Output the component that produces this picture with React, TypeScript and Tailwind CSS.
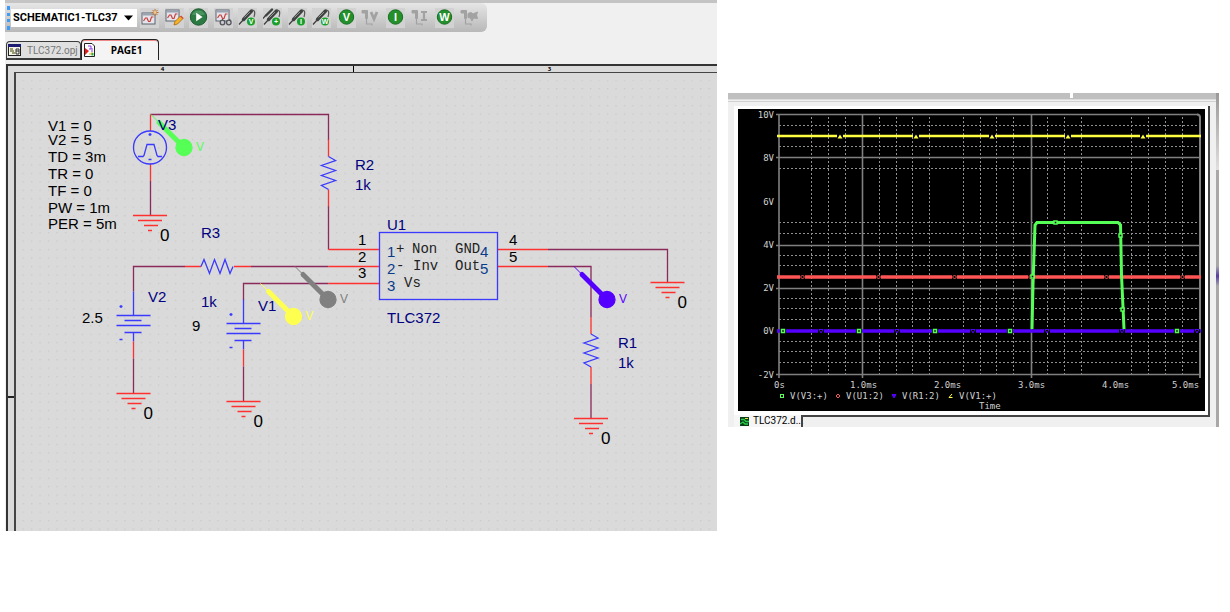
import React from "react";

const WIRE = "#8a2a5a";
const PIN = "#ff3030";
const PART = "#3a3aff";
const LABEL = "#000080";

/* ---------- Toolbar icons ---------- */

function GraphWindow() {
  return (
    <g>
      <rect x="2" y="5" width="13" height="11" fill="#e4e4ea" stroke="#5b6470" />
      <path d="M2 6.5h13" stroke="#9aa3b0" strokeWidth="2" />
      <path d="M3.5 13 5.5 10 7 10 8.5 13.5 10 13.5 11.5 9 13.5 9" fill="none" stroke="#c8403c" strokeWidth="1.2" />
    </g>
  );
}

function NewProfileIcon() {
  return (
    <g>
      <GraphWindow />
      <path d="M15 1v7M11.5 4.5h7M12.5 2l5 5M17.5 2l-5 5" stroke="#b87434" strokeWidth="1" />
      <circle cx="15" cy="4.5" r="1.4" fill="#f3c98d" />
    </g>
  );
}

function EditProfileIcon() {
  return (
    <g>
      <g transform="translate(-1 -3)">
        <GraphWindow />
      </g>
      <path d="M9 17 10 13.5 15.5 8 18 10.5 12.5 16Z" fill="#f5b32c" stroke="#a8660c" strokeWidth="0.8" />
      <path d="M15.5 8 18 10.5" stroke="#d84c3c" strokeWidth="1.6" />
    </g>
  );
}

function RunIcon() {
  return (
    <g>
      <circle cx="9.5" cy="9" r="8.2" fill="#2c7a43" stroke="#1d5a2f" />
      <path d="M3 7a7 7 0 0 1 13 0Z" fill="#5fa173" opacity="0.6" />
      <path d="M7.2 4.8v8.4L13.6 9Z" fill="#fff" />
    </g>
  );
}

function ViewResultsIcon() {
  return (
    <g>
      <g transform="translate(0 -3)">
        <GraphWindow />
      </g>
      <path d="M7 13 9 11M17 13l-1.5-2" stroke="#55565c" strokeWidth="1" />
      <circle cx="8.5" cy="14.5" r="2.3" fill="#c9c9cf" stroke="#55565c" strokeWidth="1.3" />
      <circle cx="14.8" cy="14.5" r="2.3" fill="#c9c9cf" stroke="#55565c" strokeWidth="1.3" />
    </g>
  );
}

function Needle() {
  return (
    <g>
      <path d="M1 16.5 6 11" stroke="#3c3c3c" strokeWidth="1.2" />
      <path d="M5.5 11.5 13.5 3" stroke="#3f4140" strokeWidth="3.4" strokeLinecap="round" />
      <path d="M6.5 9.5 12 4" stroke="#9a9c9b" strokeWidth="0.9" />
      <path d="M14 2c3.5 0 3 3.500 2 7" fill="none" stroke="#555" strokeWidth="1.200" />
    </g>
  );
}

function Badge({ letter }: { letter: string }) {
  return (
    <g>
      <circle cx="13" cy="13.5" r="4" fill="#18a02a" />
      <text x="13" y="16" textAnchor="middle" className="font-['Liberation_Sans'] text-[7px] font-bold" fill="#fff">
        {letter}
      </text>
    </g>
  );
}

function ProbeIcon({ letter, twin }: { letter: string; twin?: boolean }) {
  return (
    <g>
      {twin && (
        <g transform="translate(-1 -2)">
          <path d="M1 12.5 4 9" stroke="#3c3c3c" strokeWidth="1.2" />
          <path d="M4 9.5 10 3.5" stroke="#3f4140" strokeWidth="2.4" strokeLinecap="round" />
        </g>
      )}
      <Needle />
      <Badge letter={letter} />
    </g>
  );
}

function DiscIcon({ letter }: { letter: string }) {
  return (
    <g>
      <circle cx="9.5" cy="9" r="7.2" fill="#23902c" stroke="#157020" />
      <text x="9.5" y="12.8" textAnchor="middle" className="font-['Liberation_Sans'] text-[11px] font-bold" fill="#fff">
        {letter}
      </text>
    </g>
  );
}

function DisabledMarkerIcon({ kind }: { kind: "V" | "I" | "W" }) {
  return (
    <g fill="none" stroke="#a2a2a2">
      <path d="M1 2.5h5.5v8H4.500V5H1Z" fill="#a2a2a2" />
      <path d="M5.5 11v5H11v1.5" strokeWidth="1.2" />
      {kind === "V" && <path d="M10 4 13 11 16 4" strokeWidth="2.8" />}
      {kind === "I" && <path d="M10 4h6M13 4v8M10 12h6" strokeWidth="2.2" />}
      {kind === "W" && (
        <path d="M8 5.500 11 4.500 13 6 17.500 4 16.500 7 17.500 10.500 13.500 10 12 13 10.500 10 8 9.500Z" fill="#a2a2a2" strokeWidth="1" />
      )}
    </g>
  );
}

const tools: { name: string; icon: React.ReactNode; disabled?: boolean }[] = [
  { name: "New simulation profile", icon: <NewProfileIcon /> },
  { name: "Edit simulation profile", icon: <EditProfileIcon /> },
  { name: "Run", icon: <RunIcon /> },
  { name: "View simulation results", icon: <ViewResultsIcon /> },
  { name: "Voltage marker", icon: <ProbeIcon letter="V" /> },
  { name: "Differential voltage markers", icon: <ProbeIcon letter="+" twin /> },
  { name: "Current marker", icon: <ProbeIcon letter="I" /> },
  { name: "Power marker", icon: <ProbeIcon letter="W" /> },
  { name: "Enable bias voltage display", icon: <DiscIcon letter="V" /> },
  { name: "Toggle voltage on net", icon: <DisabledMarkerIcon kind="V" />, disabled: true },
  { name: "Enable bias current display", icon: <DiscIcon letter="I" /> },
  { name: "Toggle current on pin", icon: <DisabledMarkerIcon kind="I" />, disabled: true },
  { name: "Enable bias power display", icon: <DiscIcon letter="W" /> },
  { name: "Toggle power on part", icon: <DisabledMarkerIcon kind="W" />, disabled: true },
];

function Toolbar() {
  return (
    <div className="flex h-[29px] w-[482px] items-center rounded-r-md bg-gradient-to-b from-[#e6e6e6] to-[#b8b8b8] pl-[2px]">
      <span className="h-6 w-[3px] border-l-[3px] border-dotted border-[#3d9bf5]" />
      <div className="relative ml-px h-[18px] w-[126px] shrink-0 bg-white">
        <select
          aria-label="Active simulation profile"
          className="block h-[18px] w-[107px] appearance-none overflow-hidden bg-transparent pl-[2px] font-['Roboto',sans-serif] text-[11px] leading-[17px] font-bold text-black outline-none"
        >
          <option>SCHEMATIC1-TLC372</option>
        </select>
        <svg className="pointer-events-none absolute top-[6px] right-[4px] h-[6px] w-[9px]" viewBox="0 0 9 6">
          <path d="M0 0.5h9L4.500 5.500Z" fill="#000" />
        </svg>
      </div>
      <div className="flex flex-1 justify-between pr-2 pl-[3px]">
        {tools.map((t) => (
          <button
            key={t.name}
            type="button"
            aria-label={t.name}
            disabled={t.disabled}
            className="h-5 w-[19px] bg-[#d2d2d2] disabled:bg-transparent"
          >
            <svg className="h-[19px] w-[19px]" viewBox="0 0 19 19">
              {t.icon}
            </svg>
          </button>
        ))}
      </div>
    </div>
  );
}

function DocumentTabs() {
  return (
    <div className="flex h-[21px] items-end pl-px">
      <button
        type="button"
        className="flex h-[19px] w-[75px] items-center gap-[6px] rounded-t border border-b-2 border-[#3a3a3a] bg-[#e0e0e0] pl-px font-['Roboto',sans-serif] text-[10px] text-[#777]"
      >
        <svg className="h-3 w-[13px] shrink-0" viewBox="0 0 13 12">
          <rect x="0.5" y="0.5" width="12" height="11" fill="#f4f4e8" stroke="#222" />
          <path d="M0 1.5h13" stroke="#1c1c70" strokeWidth="3" />
          <path d="M2 5h3M2 7h4M4 9h3" stroke="#7d8048" strokeWidth="1.5" />
          <path d="M8 5h3v5H8ZM8 7h3" fill="none" stroke="#333" />
        </svg>
        TLC372.opj
      </button>
      <button
        type="button"
        className="flex h-[21px] w-[78px] items-center rounded-t border border-b-0 border-[#222] bg-[#f4f4f4] pl-[2px] font-['Open_Sans',sans-serif] text-[10px] font-bold text-black shadow-[inset_0_1px_0_#ee8888]"
      >
        <svg className="h-[14px] w-[11px] shrink-0" viewBox="0 0 11 14">
          <path d="M0.5 0.5H8L10.500 3v10.500H0.500Z" fill="#fff" stroke="#222" />
          <path d="M1 5l4 3-4 4Z" fill="#f01818" />
          <path d="M4 3h3v3H5M8 5v4" fill="none" stroke="#8a3ae0" />
          <path d="M5 11h3V9" fill="none" stroke="#e8b000" />
          <path d="M8.5 10v2.5" stroke="#20b040" strokeWidth="2" />
        </svg>
        <span className="flex-1 text-center">PAGE1</span>
      </button>
    </div>
  );
}

/* ---------- Schematic ---------- */

function Ground({ x, y }: { x: number; y: number }) {
  return (
    <g>
      <path d={`M${x - 17} ${y}h34M${x - 12} ${y + 5}h24M${x - 6} ${y + 10}h14M${x - 2} ${y + 15}h4`} stroke={PIN} />
      <text x={x + 10} y={y + 25} className="text-[17px]" fill="#000">
        0
      </text>
    </g>
  );
}

function Battery({ x, y }: { x: number; y: number }) {
  return (
    <g>
      <path d={`M${x} ${y - 24}v24M${x} ${y + 17}v9`} stroke={PART} />
      <path d={`M${x - 17} ${y}h34M${x - 9} ${y + 5}h17M${x - 17} ${y + 10}h34M${x - 9} ${y + 17}h17`} stroke={PART} />
      <path d={`M${x - 14} ${y - 9}h3M${x - 12.5} ${y - 10.5}v3M${x - 14} ${y + 24}h3`} stroke={PART} />
      <path d={`M${x} ${y + 26}v17`} stroke={PIN} />
      <path d={`M${x} ${y + 43}v35`} stroke={WIRE} />
      <Ground x={x} y={y + 78} />
    </g>
  );
}

function ResistorDown({ x, y }: { x: number; y: number }) {
  return (
    <g>
      <path d={`M${x} ${y - 17}v17M${x} ${y + 33}v17`} stroke={PIN} />
      <path d={`M${x} ${y}l7 4l-14 5l14 5l-14 5l14 5l-14 5l7 4`} stroke={PART} />
    </g>
  );
}

function Probe({ x, y, color }: { x: number; y: number; color: string }) {
  return (
    <g stroke={color}>
      <path d={`M${x} ${y}l8 8`} strokeWidth="1" />
      <path d={`M${x + 8} ${y + 8}l24 24`} strokeWidth="5" strokeLinecap="round" />
      <circle cx={x + 33} cy={y + 33} r="8" fill={color} />
      <text x={x + 45} y={y + 36} className="text-[12px]" fill={color} stroke="none">
        V
      </text>
    </g>
  );
}

const params: [string, number][] = [
  ["V1 = 0", 131],
  ["V2 = 5", 145],
  ["TD = 3m", 162],
  ["TR = 0", 179],
  ["TF = 0", 196],
  ["PW = 1m", 213],
  ["PER = 5m", 229],
];

const partLabels: [string, number, number][] = [
  ["V3", 158, 130],
  ["R2", 355, 170],
  ["1k", 355, 190],
  ["R3", 201, 238],
  ["1k", 201, 307],
  ["U1", 387, 230],
  ["TLC372", 387, 323],
  ["V2", 148, 302],
  ["V1", 258, 311],
  ["R1", 618, 348],
  ["1k", 618, 368],
];

const blackLabels: [string, number, number][] = [
  ["1", 358, 245],
  ["2", 358, 262],
  ["3", 358, 278],
  ["4", 509, 245],
  ["5", 509, 262],
  ["2.5", 82, 323],
  ["9", 192, 331],
];

const pinNumbers: [string, number, number][] = [
  ["1", 387, 257],
  ["2", 387, 274],
  ["3", 387, 291],
  ["4", 480, 257],
  ["5", 480, 274],
];

const pinNames: [string, number, number][] = [
  ["+", 396, 253],
  ["Non", 412, 253],
  ["-", 396, 270],
  ["Inv", 413, 270],
  ["Vs", 404, 287],
  ["GND", 455, 253],
  ["Out", 455, 270],
];

function Schematic() {
  return (
    <svg
      viewBox="16 73 701 458"
      className="block h-auto w-full bg-[#dadada] font-['Liberation_Sans',Arial,sans-serif]"
      role="img"
      aria-label="Schematic"
    >
      <defs>
        <pattern id="dots" x="22.5" y="88" width="8.47" height="8.47" patternUnits="userSpaceOnUse">
          <rect width="1.3" height="1.3" fill="#c9c9c9" />
        </pattern>
      </defs>
      <rect x="16" y="80" width="701" height="451" fill="url(#dots)" />

      <g fill="none" strokeWidth="1.3">
        <path d="M150.5 114.5H328.500V140M328.500 206V249.500M150.500 181V215.500" stroke={WIRE} />
        <path d="M150.5 114.5V131M150.500 163.500V181" stroke={PIN} />
        <circle cx="150" cy="147.5" r="16.5" stroke={PART} />
        <path d="M138 156.5h5l1-1 3-11h7l3 11 1 1h4M148.500 134.500h3M150 133v3M148.500 159.500h3" stroke={PART} />
        <Ground x={150} y={215.5} />

        <ResistorDown x={328.5} y={156.5} />

        <path d="M133.5 291.5V266.500H185M251 266.500H328.500M243.500 300V283.500H328.500" stroke={WIRE} />
        <path d="M185 266.5H201M234 266.500H251M328.500 249.500H379M328.500 266.500H379M328.500 283.500H379" stroke={PIN} />
        <path d="M201 266.5l3-7 5.500 14 5-14 5.500 14 5-14 5 14 3-7" stroke={PART} />
        <Battery x={133.5} y={315.5} />
        <Battery x={243.5} y={323.5} />

        <path d="M498 249.5H548M498 266.500H548" stroke={PIN} />
        <path d="M548 249.5H667.500V283M548 266.500H591V317M591 384V418" stroke={WIRE} />
        <Ground x={667.5} y={282.5} />
        <ResistorDown x={591} y={334} />
        <Ground x={591} y={418.5} />

        <rect x="379.5" y="232.5" width="118" height="67" stroke={PART} />

        <Probe x={151} y={114.5} color="#55ff55" />
        <Probe x={260.5} y={283.5} color="#ffff50" />
        <Probe x={295} y={266.5} color="#808080" />
        <Probe x={574} y={266.5} color="#5500ff" />
      </g>

      <g className="text-[15px]">
        {params.map(([t, y]) => (
          <text key={t} x="48" y={y}>
            {t}
          </text>
        ))}
        {partLabels.map(([t, x, y]) => (
          <text key={`${t}-${x}-${y}`} x={x} y={y} fill={LABEL}>
            {t}
          </text>
        ))}
        {blackLabels.map(([t, x, y]) => (
          <text key={`${t}-${x}`} x={x} y={y}>
            {t}
          </text>
        ))}
        {pinNumbers.map(([t, x, y]) => (
          <text key={t} x={x} y={y} fill="#0a3c8c">
            {t}
          </text>
        ))}
      </g>
      <g className="font-['Liberation_Mono','Courier_New',monospace] text-[14px]" fill="#222">
        {pinNames.map(([t, x, y]) => (
          <text key={t} x={x} y={y}>
            {t}
          </text>
        ))}
      </g>
    </svg>
  );
}

function SchematicWindow() {
  return (
    <section className="bg-[#f0f0f0]">
      <div className="h-[3px] bg-[#c4c4c4]" />
      <Toolbar />
      <div className="pt-[7px]">
        <DocumentTabs />
      </div>
      <div className="pt-1 pl-px">
        <div className="border-t-2 border-l-2 border-[#333] bg-[#dadada]">
          <div className="flex h-[6px] font-['Open_Sans',sans-serif] text-[6px] leading-[6px] font-bold text-black">
            <div className="min-w-0 flex-[346] border-r border-black">
              <p className="pr-9 text-center">4</p>
            </div>
            <div className="min-w-0 flex-[364]">
              <p className="pl-7 text-center">3</p>
            </div>
          </div>
          <div className="flex">
            <div className="w-[6px] shrink-0">
              <div className="h-[326px] border-b-2 border-[#222]" />
            </div>
            <div className="min-w-0 flex-1 border-t border-l-2 border-[#444]">
              <Schematic />
            </div>
          </div>
        </div>
      </div>
    </section>
  );
}

/* ---------- Waveform plot ---------- */

const dottedX = [812, 829, 846, 880, 897, 913, 930, 964, 981, 997, 1014, 1048, 1065, 1082, 1132, 1149, 1166, 1183];
const dottedY = [126, 147, 169, 223, 234, 256, 266, 299, 309, 320, 342, 352, 363];
const voltTicks: [string, number][] = [
  ["10V", 115],
  ["8V", 158],
  ["6V", 202],
  ["4V", 245],
  ["2V", 288],
  ["0V", 331],
  ["-2V", 375],
];
const timeTicks: [string, number][] = [
  ["0s", 774],
  ["1.0ms", 850],
  ["2.0ms", 934],
  ["3.0ms", 1018],
  ["4.0ms", 1102],
  ["5.0ms", 1172],
];

function Plot() {
  return (
    <svg
      viewBox="738 109 467 302"
      className="block h-auto w-full bg-black font-['DejaVu_Sans_Mono','Liberation_Mono',monospace] text-[9px]"
      role="img"
      aria-label="Simulation waveforms"
    >
      <g stroke="#909090" strokeDasharray="2 2">
        {dottedX.map((x) => (
          <path key={x} d={`M${x - 0.5} 117V374`} />
        ))}
        {dottedY.map((y) => (
          <path key={y} d={`M779 ${y - 0.5}H1199`} />
        ))}
      </g>
      <g stroke="#808080" fill="none" strokeWidth="1.3">
        <path d="M776 114.5H1198M776 157.500H1199M776 245.500H1199M776 288.500H1199M776 374.500H1200" />
        <path d="M779 114V378M862.5 115V378M1031.500 115V378" strokeWidth="1.6" />
        <path d="M1197 114.5q3 0 3 3V378" strokeWidth="2" />
      </g>

      <g fill="none">
        <path d="M777 136H1201" stroke="#ffff40" strokeWidth="2.5" />
        <path d="M777 277H1201" stroke="#ff5555" strokeWidth="3.5" />
        <path d="M777 331H1201" stroke="#5500ff" strokeWidth="3.5" />
        <path d="M1032 329 1033 285 1035 225 1037 222.5H1118L1120.500 225 1121.500 275 1124 329" stroke="#55ff55" strokeWidth="3" />
      </g>

      {[840, 916, 992, 1068, 1143].map((x) => (
        <g key={x}>
          <rect x={x - 3} y="134" width="6" height="5" fill="#000" />
          <path d={`M${x - 2.5} 138.5L${x} 134.500L${x + 2.5} 138.500Z`} fill="#ffff40" />
        </g>
      ))}
      {[802, 878, 954, 1030, 1106, 1182].map((x) => (
        <g key={x}>
          <rect x={x - 2} y="275" width="5" height="4" fill="#000" />
          <path d={`M${x - 1.5} 277l2-2 2 2-2 2Z`} fill="none" stroke="#ff5555" />
        </g>
      ))}
      {[821, 897, 973, 1047, 1122, 1197].map((x) => (
        <g key={x}>
          <rect x={x - 3} y="329" width="6" height="4" fill="#000" />
          <path d={`M${x - 2} 329.5h4l-2 3.500Z`} fill="none" stroke="#5500ff" />
        </g>
      ))}
      {[783, 859, 935, 1010, 1177].map((x) => (
        <g key={x}>
          <rect x={x - 3} y="329" width="6" height="4" fill="#000" />
          <rect x={x - 1.5} y="329.5" width="3" height="3" fill="#000" stroke="#55ff55" strokeWidth="1.5" />
        </g>
      ))}
      {[
        [1055, 222],
        [1120, 235],
        [1032, 276],
        [1122, 309],
      ].map(([x, y]) => (
        <rect key={x} x={x - 1} y={y - 1} width="3" height="3" fill="#000" stroke="#55ff55" strokeWidth="1.5" />
      ))}

      <g fill="#d0d0d0">
        {voltTicks.map(([t, y]) => (
          <text key={t} x="774" y={y + 3} textAnchor="end">
            {t}
          </text>
        ))}
        {timeTicks.map(([t, x]) => (
          <text key={t} x={x} y="388">
            {t}
          </text>
        ))}
        <text x="790" y="399">V(V3:+)</text>
        <text x="846" y="399">V(U1:2)</text>
        <text x="902" y="399">V(R1:2)</text>
        <text x="959" y="399">V(V1:+)</text>
        <text x="979" y="409">Time</text>
      </g>
      <rect x="780.5" y="394.5" width="3" height="3" fill="none" stroke="#55ff55" />
      <path d="M836 396l2-2 2 2-2 2Z" fill="none" stroke="#ff5555" />
      <path d="M892 394.5h4l-2 3.500Z" fill="#5500ff" stroke="#5500ff" />
      <path d="M952 394l-3 3.5h3.500" fill="none" stroke="#ffff40" />
    </svg>
  );
}

function PlotWindow() {
  return (
    <section className="mt-[93px] flex bg-[#f0f0f0]">
      <div className="min-w-0 flex-1">
        <div className="flex h-[6px] bg-[#bfbfbf]">
          <span className="flex-[342]" />
          <span className="h-[5px] w-[3px] bg-white" />
          <span className="flex-[143]" />
        </div>
        <div className="h-px bg-[#dcdcdc]" />
        <div className="mt-px h-px bg-[#d0d0d0]" />
        <div className="pt-1 pr-[6px] pl-[6px]">
          <div className="border-r-2 border-[#444] bg-white pt-[3px] pr-[3px] pl-1">
            <Plot />
            <div className="h-1" />
          </div>
          <div className="flex h-3">
            <button
              type="button"
              className="flex h-3 w-[67px] items-center gap-1 bg-[#f6f6f6] pl-[6px] font-['Roboto',sans-serif] text-[10px] leading-3 text-black"
            >
              <svg className="h-[9px] w-[9px] shrink-0" viewBox="0 0 9 9">
                <rect width="9" height="9" fill="#0a3c1c" />
                <path d="M1 2.5h3l2 2h3M0 7l3-2 2 2h3" fill="none" stroke="#28d048" strokeWidth="1.3" />
                <path d="M5 1.5h3" stroke="#e8e040" />
              </svg>
              TLC372.d...
            </button>
            <div className="flex-1 border-t-2 border-l-2 border-[#444]" />
          </div>
        </div>
      </div>
      <div className="flex w-[3px] shrink-0 flex-col bg-[#a8a8a8]">
        <div className="h-[77px] bg-gradient-to-b from-[#999] to-[#e0e0e0]" />
        <div className="mt-24 h-5 bg-gradient-to-b from-[#a8a8a8] via-[#5a3c9c] to-[#a8a8a8]" />
      </div>
    </section>
  );
}

export default function App() {
  return (
    <main className="min-h-screen bg-white">
      <div className="grid grid-cols-[712fr_491fr] items-start gap-x-[11px] pr-[11px] pl-[5px]">
        <SchematicWindow />
        <PlotWindow />
      </div>
    </main>
  );
}
